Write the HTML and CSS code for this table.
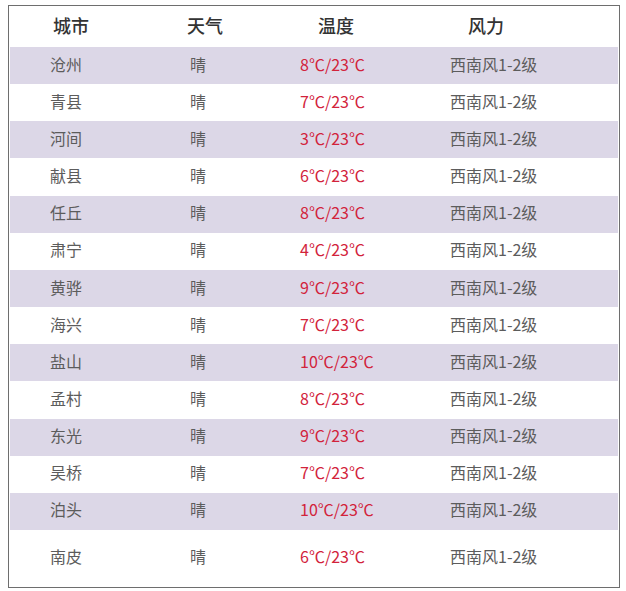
FILE: index.html
```html
<!DOCTYPE html>
<html lang="zh">
<head>
<meta charset="utf-8">
<link rel="stylesheet" href="styles.css">
</head>
<body>
<div class="table">
  <div class="row head">
    <div class="c h1">城市</div><div class="c h2">天气</div><div class="c h3">温度</div><div class="c h4">风力</div>
  </div>
  <div class="row alt"><div class="c">沧州</div><div class="c">晴</div><div class="c t">8℃/23℃</div><div class="c">西南风1-2级</div></div>
  <div class="row"><div class="c">青县</div><div class="c">晴</div><div class="c t">7℃/23℃</div><div class="c">西南风1-2级</div></div>
  <div class="row alt"><div class="c">河间</div><div class="c">晴</div><div class="c t">3℃/23℃</div><div class="c">西南风1-2级</div></div>
  <div class="row"><div class="c">献县</div><div class="c">晴</div><div class="c t">6℃/23℃</div><div class="c">西南风1-2级</div></div>
  <div class="row alt"><div class="c">任丘</div><div class="c">晴</div><div class="c t">8℃/23℃</div><div class="c">西南风1-2级</div></div>
  <div class="row"><div class="c">肃宁</div><div class="c">晴</div><div class="c t">4℃/23℃</div><div class="c">西南风1-2级</div></div>
  <div class="row alt"><div class="c">黄骅</div><div class="c">晴</div><div class="c t">9℃/23℃</div><div class="c">西南风1-2级</div></div>
  <div class="row"><div class="c">海兴</div><div class="c">晴</div><div class="c t">7℃/23℃</div><div class="c">西南风1-2级</div></div>
  <div class="row alt"><div class="c">盐山</div><div class="c">晴</div><div class="c t">10℃/23℃</div><div class="c">西南风1-2级</div></div>
  <div class="row"><div class="c">孟村</div><div class="c">晴</div><div class="c t">8℃/23℃</div><div class="c">西南风1-2级</div></div>
  <div class="row alt"><div class="c">东光</div><div class="c">晴</div><div class="c t">9℃/23℃</div><div class="c">西南风1-2级</div></div>
  <div class="row"><div class="c">吴桥</div><div class="c">晴</div><div class="c t">7℃/23℃</div><div class="c">西南风1-2级</div></div>
  <div class="row alt"><div class="c">泊头</div><div class="c">晴</div><div class="c t">10℃/23℃</div><div class="c">西南风1-2级</div></div>
  <div class="row last"><div class="c">南皮</div><div class="c">晴</div><div class="c t">6℃/23℃</div><div class="c">西南风1-2级</div></div>
</div>
</body>
</html>
```
FILE: styles.css
```css
html, body {
  margin: 0;
  padding: 0;
  background: #ffffff;
}
body {
  font-family: "Noto Sans CJK SC", "Noto Sans", sans-serif;
}
.table {
  margin: 5px 0 0 8px;
  width: 612px;
  height: 583px;
  box-sizing: border-box;
  border: 1px solid #6e6e6e;
  padding: 0 1px;
  display: flex;
  flex-direction: column;
  background: #fff;
}
.row {
  display: grid;
  grid-template-columns: 140px 110px 150px 1fr;
  align-items: center;
  box-sizing: border-box;
  padding-left: 40px;
  padding-bottom: 4px;
  height: 37.17px;
  font-size: 16px;
  color: #5c5c5c;
  line-height: 1;
}
.row.alt {
  background: #dcd7e7;
}
.row.head {
  height: 41px;
  font-size: 18px;
  font-weight: 500;
  color: #333333;
  padding-bottom: 4px;
}
.row.last {
  flex: 1;
  height: auto;
  padding-bottom: 6px;
}
.c {
  white-space: nowrap;
}
.t {
  color: #d2233b;
}
.h1 { padding-left: 3px; }
.h2 { margin-left: -3px; }
.h3 { padding-left: 18px; }
.h4 { padding-left: 18px; }
```
